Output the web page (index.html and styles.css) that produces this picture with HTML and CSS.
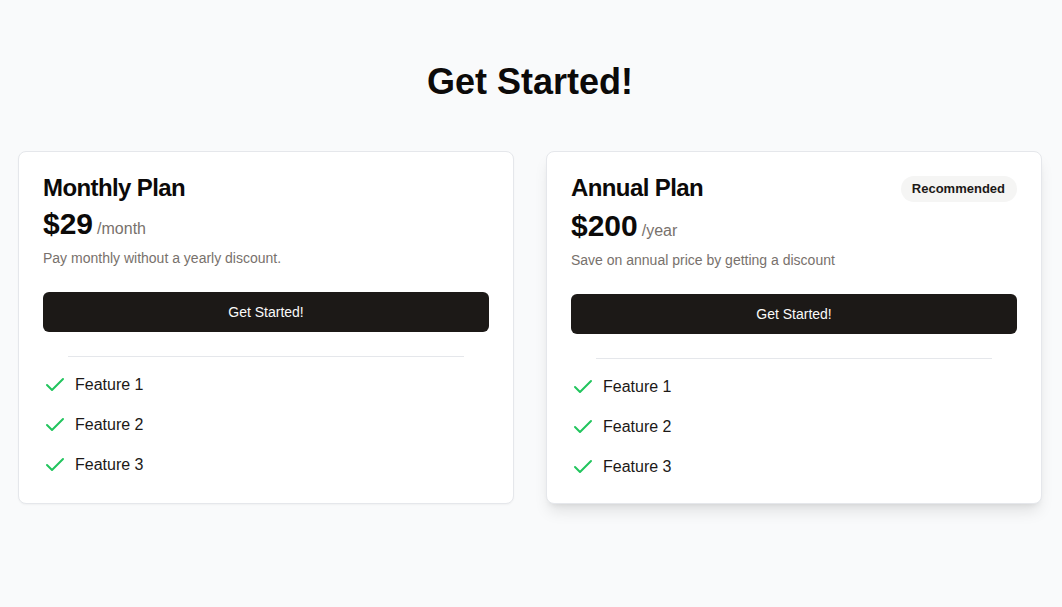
FILE: index.html
```html
<!DOCTYPE html>
<html lang="en">
<head>
<meta charset="utf-8">
<title>Get Started!</title>
<link rel="stylesheet" href="styles.css">
</head>
<body>
<main class="page">
  <h1 class="heading">Get Started!</h1>
  <div class="plans">
    <section class="card">
      <div class="card-header">
        <div class="title-row">
          <h2 class="card-title">Monthly Plan</h2>
        </div>
        <div class="price"><span class="amount">$29</span><span class="period">/month</span></div>
        <p class="desc">Pay monthly without a yearly discount.</p>
      </div>
      <div class="card-content">
        <button class="cta">Get Started!</button>
        <hr class="sep">
        <ul class="features">
          <li><svg class="check" viewBox="0 0 24 24" fill="none" stroke="currentColor" stroke-width="2" stroke-linecap="round" stroke-linejoin="round"><path d="M20 6 9 17l-5-5"/></svg><span>Feature 1</span></li>
          <li><svg class="check" viewBox="0 0 24 24" fill="none" stroke="currentColor" stroke-width="2" stroke-linecap="round" stroke-linejoin="round"><path d="M20 6 9 17l-5-5"/></svg><span>Feature 2</span></li>
          <li><svg class="check" viewBox="0 0 24 24" fill="none" stroke="currentColor" stroke-width="2" stroke-linecap="round" stroke-linejoin="round"><path d="M20 6 9 17l-5-5"/></svg><span>Feature 3</span></li>
        </ul>
      </div>
    </section>
    <section class="card card-featured">
      <div class="card-header">
        <div class="title-row">
          <h2 class="card-title">Annual Plan</h2>
          <span class="badge">Recommended</span>
        </div>
        <div class="price"><span class="amount">$200</span><span class="period">/year</span></div>
        <p class="desc">Save on annual price by getting a discount</p>
      </div>
      <div class="card-content">
        <button class="cta">Get Started!</button>
        <hr class="sep">
        <ul class="features">
          <li><svg class="check" viewBox="0 0 24 24" fill="none" stroke="currentColor" stroke-width="2" stroke-linecap="round" stroke-linejoin="round"><path d="M20 6 9 17l-5-5"/></svg><span>Feature 1</span></li>
          <li><svg class="check" viewBox="0 0 24 24" fill="none" stroke="currentColor" stroke-width="2" stroke-linecap="round" stroke-linejoin="round"><path d="M20 6 9 17l-5-5"/></svg><span>Feature 2</span></li>
          <li><svg class="check" viewBox="0 0 24 24" fill="none" stroke="currentColor" stroke-width="2" stroke-linecap="round" stroke-linejoin="round"><path d="M20 6 9 17l-5-5"/></svg><span>Feature 3</span></li>
        </ul>
      </div>
    </section>
  </div>
</main>
</body>
</html>
```

FILE: styles.css
```css
* { box-sizing: border-box; }
html, body { margin: 0; padding: 0; }
body {
  background: #f9fafb;
  font-family: "Liberation Sans", Arial, sans-serif;
  color: #0c0a09;
}
.page {
  padding: 62px 0 40px;
}
.heading {
  margin: 0 0 49px;
  text-align: center;
  font-size: 36px;
  line-height: 40px;
  font-weight: 700;
  position: relative;
  left: -1px;
}
.plans {
  width: 1024px;
  margin: 0 auto;
  position: relative;
  left: -1px;
  display: grid;
  grid-template-columns: 1fr 1fr;
  gap: 32px;
  align-items: stretch;
}
.card {
  background: #fff;
  border: 1px solid #e5e7eb;
  border-radius: 8px;
  box-shadow: 0 1px 2px rgba(0,0,0,0.04);
}
.card-featured {
  box-shadow: 0 10px 15px -3px rgba(0,0,0,0.1), 0 4px 6px -4px rgba(0,0,0,0.1);
}
.card-header {
  padding: 24px;
  display: flex;
  flex-direction: column;
  gap: 6px;
}
.title-row {
  display: flex;
  justify-content: space-between;
  align-items: flex-start;
}
.card-title {
  margin: 0;
  font-size: 24px;
  line-height: 24px;
  font-weight: 700;
  letter-spacing: -0.6px;
}
.badge {
  background: #f5f5f4;
  color: #1c1917;
  border-radius: 999px;
  font-size: 13px;
  line-height: 18px;
  font-weight: 700;
  padding: 4px 12px 4px 11px;
}
.price {
  display: flex;
  align-items: baseline;
  gap: 4px;
  height: 36px;
}
.amount {
  font-size: 30px;
  line-height: 36px;
  font-weight: 700;
}
.period {
  font-size: 16px;
  line-height: 24px;
  color: #78716c;
}
.desc {
  margin: 0;
  font-size: 14px;
  line-height: 20px;
  color: #78716c;
}
.card-content {
  padding: 0 24px 24px;
}
.cta {
  display: block;
  width: 100%;
  height: 40px;
  border: 0;
  border-radius: 6px;
  background: #1c1917;
  color: #fafaf9;
  font-family: inherit;
  font-size: 14px;
  cursor: pointer;
}
.sep {
  border: 0;
  border-top: 1px solid #e5e7eb;
  margin: 24px 25px 16px;
}
.features {
  list-style: none;
  margin: 0;
  padding: 0;
  display: flex;
  flex-direction: column;
  gap: 16px;
}
.features li {
  display: flex;
  align-items: center;
  gap: 8px;
  font-size: 16px;
  line-height: 24px;
  color: #1c1917;
}
.check {
  width: 24px;
  height: 24px;
  color: #22c55e;
  flex: none;
}
```
